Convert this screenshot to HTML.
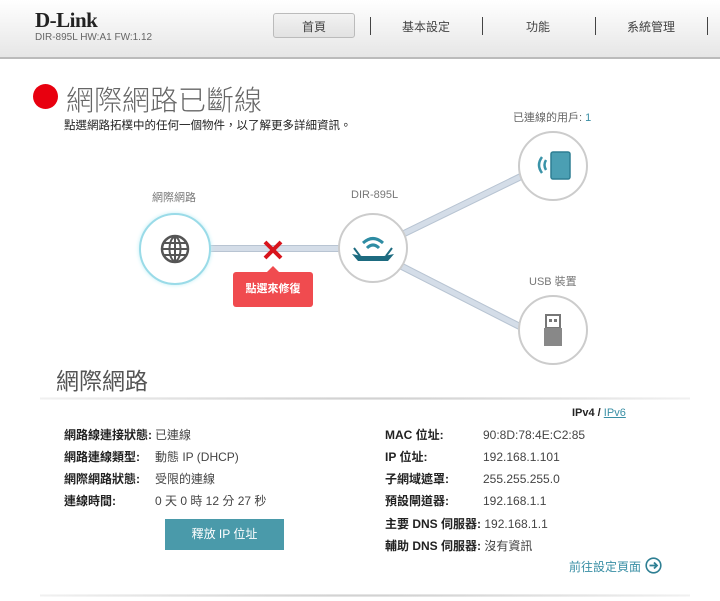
<!DOCTYPE html><html><head><meta charset="utf-8"><style>
body{margin:0;width:720px;height:601px;background:#fff;font-family:"Liberation Sans","Noto Sans CJK TC",sans-serif;position:relative;overflow:hidden;color:#333}
.a{position:absolute;white-space:nowrap}
.hdr{position:absolute;left:0;top:0;width:720px;height:57px;background:linear-gradient(#fff,#e6e6e6);border-bottom:2px solid #bbb}
.sep{position:absolute;top:17px;width:1px;height:18px;background:#444}
.nav{position:absolute;top:18px;font-size:12px;color:#444;width:100px;text-align:center}
.circ{position:absolute;border-radius:50%;background:#fff;border:2px solid #ccc;box-sizing:border-box}
.lbl{font-size:12px;font-weight:bold;color:#222;line-height:16px}
.val{font-size:12px;color:#444;line-height:16px}
.ln{position:absolute;height:5px;background:#d4dde8;border-top:1px solid #b8c4d2;border-bottom:1px solid #b8c4d2;transform-origin:0 50%}
</style></head><body>
<div class="hdr"></div>
<div class="a" style="left:35px;top:8px;font:bold 21px 'Liberation Serif',serif;color:#222;letter-spacing:-0.5px">D-Link</div>
<div class="a" style="left:35px;top:32px;font-size:10px;color:#666">DIR-895L HW:A1 FW:1.12</div>
<div class="a" style="left:273px;top:13px;width:82px;height:25px;border:1px solid #bbb;border-radius:3px;background:linear-gradient(#f2f2f2,#e2e2e2);box-sizing:border-box"></div>
<div class="nav" style="left:264px">首頁</div>
<div class="nav" style="left:376px">基本設定</div>
<div class="nav" style="left:488px">功能</div>
<div class="nav" style="left:601px">系統管理</div>
<div class="sep" style="left:370px"></div><div class="sep" style="left:482px"></div><div class="sep" style="left:595px"></div><div class="sep" style="left:707px"></div>

<div class="a" style="left:33px;top:84px;width:25px;height:25px;border-radius:50%;background:#e8000f"></div>
<div class="a" style="left:66px;top:79px;font-size:28px;color:#666;font-weight:300">網際網路已斷線</div>
<div class="a" style="left:64px;top:117px;font-size:11.5px;color:#222">點選網路拓樸中的任何一個物件，以了解更多詳細資訊。</div>
<div class="a" style="left:513px;top:109px;font-size:11px;color:#666">已連線的用戶: <span style="color:#3a8fa5">1</span></div>

<div class="ln" style="left:208px;top:245px;width:134px"></div>
<div class="ln" style="left:400px;top:232px;width:135px;transform:rotate(-26deg)"></div>
<div class="ln" style="left:400px;top:262px;width:135px;transform:rotate(27deg)"></div>

<div class="a" style="left:152px;top:189px;font-size:11px;color:#777">網際網路</div>
<div class="a" style="left:351px;top:189px;font-size:11px;color:#777">DIR-895L</div>
<div class="a" style="left:529px;top:273px;font-size:11px;color:#777">USB 裝置</div>

<div class="circ" style="left:139px;top:213px;width:72px;height:72px;border-color:#9adbe8;box-shadow:0 0 4px #bfeef5"></div>
<svg class="a" style="left:159px;top:233px" width="32" height="32" viewBox="0 0 32 32"><circle cx="16" cy="16" r="13" fill="none" stroke="#555" stroke-width="2.5"/><ellipse cx="16" cy="16" rx="5.5" ry="12" fill="none" stroke="#555" stroke-width="2"/><line x1="16" y1="3" x2="16" y2="29" stroke="#555" stroke-width="2"/><line x1="3" y1="16" x2="29" y2="16" stroke="#555" stroke-width="2"/><line x1="5" y1="10" x2="27" y2="10" stroke="#555" stroke-width="2"/><line x1="5" y1="22" x2="27" y2="22" stroke="#555" stroke-width="2"/></svg>

<svg class="a" style="left:262px;top:239px" width="22" height="22" viewBox="0 0 22 22"><path d="M3 3L19 19M19 3L3 19" stroke="#d8141c" stroke-width="4"/></svg>
<div class="a" style="left:267px;top:266px;width:0;height:0;border-left:6px solid transparent;border-right:6px solid transparent;border-bottom:6px solid #f04b4f"></div>
<div class="a" style="left:233px;top:272px;width:80px;height:35px;background:#f04b4f;border-radius:3px;color:#fff;font-size:11px;font-weight:bold;text-align:center;line-height:35px">點選來修復</div>

<div class="circ" style="left:338px;top:213px;width:70px;height:70px"></div>
<svg class="a" style="left:350px;top:230px" width="46" height="36" viewBox="0 0 46 36"><path d="M13 13Q23 4 33 13" fill="none" stroke="#2e8ca3" stroke-width="3"/><path d="M17 18Q23 12 29 18" fill="none" stroke="#2e8ca3" stroke-width="3"/><path d="M2 24L12 26L34 26L44 24L38 31L8 31Z" fill="#1d6b80"/><path d="M4 18L10 26M42 18L36 26" stroke="#1d6b80" stroke-width="2"/></svg>

<div class="circ" style="left:518px;top:131px;width:70px;height:70px"></div>
<svg class="a" style="left:533px;top:148px" width="40" height="36" viewBox="0 0 40 36"><path d="M9 9Q3 17 9 25M13 12Q10 17 13 22" fill="none" stroke="#3a93a8" stroke-width="2.5"/><rect x="18" y="4" width="19" height="27" rx="2" fill="#4b9fb3" stroke="#2e7f93" stroke-width="1.5"/></svg>

<div class="circ" style="left:518px;top:295px;width:70px;height:70px"></div>
<svg class="a" style="left:541px;top:313px" width="24" height="36" viewBox="0 0 24 36"><rect x="5" y="2" width="14" height="13" fill="#fff" stroke="#777" stroke-width="2"/><rect x="8" y="6" width="3" height="3" fill="#777"/><rect x="13" y="6" width="3" height="3" fill="#777"/><rect x="3" y="15" width="18" height="18" fill="#888"/></svg>

<div class="a" style="left:56px;top:362px;font-size:23px;color:#555">網際網路</div>
<div class="a" style="left:40px;top:397px;width:650px;height:3px;background:radial-gradient(ellipse at center,#ccc,rgba(255,255,255,0))"></div>

<div class="a" style="left:572px;top:407px;font-size:11px;font-weight:bold;color:#222">IPv4 / <span style="color:#3a8fa5;text-decoration:underline;font-weight:normal">IPv6</span></div>

<div class="a lbl" style="left:64px;top:427px">網路線連接狀態:</div><div class="a val" style="left:155px;top:427px">已連線</div>
<div class="a lbl" style="left:64px;top:449px">網路連線類型:</div><div class="a val" style="left:155px;top:449px">動態 IP (DHCP)</div>
<div class="a lbl" style="left:64px;top:471px">網際網路狀態:</div><div class="a val" style="left:155px;top:471px">受限的連線</div>
<div class="a lbl" style="left:64px;top:493px">連線時間:</div><div class="a val" style="left:155px;top:493px">0 天 0 時 12 分 27 秒</div>
<div class="a" style="left:165px;top:519px;width:119px;height:31px;background:#4a9aaa;color:#fff;font-size:12px;text-align:center;line-height:31px">釋放 IP 位址</div>

<div class="a lbl" style="left:385px;top:427px">MAC 位址:</div><div class="a val" style="left:483px;top:427px">90:8D:78:4E:C2:85</div>
<div class="a lbl" style="left:385px;top:449px">IP 位址:</div><div class="a val" style="left:483px;top:449px">192.168.1.101</div>
<div class="a lbl" style="left:385px;top:471px">子網域遮罩:</div><div class="a val" style="left:483px;top:471px">255.255.255.0</div>
<div class="a lbl" style="left:385px;top:493px">預設閘道器:</div><div class="a val" style="left:483px;top:493px">192.168.1.1</div>
<div class="a lbl" style="left:385px;top:516px">主要 DNS 伺服器: <span class="val" style="font-weight:normal">192.168.1.1</span></div>
<div class="a lbl" style="left:385px;top:538px">輔助 DNS 伺服器: <span class="val" style="font-weight:normal">沒有資訊</span></div>
<div class="a" style="left:569px;top:558px;font-size:12px;color:#3a8fa5">前往設定頁面</div>
<svg class="a" style="left:645px;top:557px" width="17" height="17" viewBox="0 0 17 17"><circle cx="8.5" cy="8.5" r="7.3" fill="none" stroke="#2e7f93" stroke-width="1.6"/><path d="M4.5 8.5H12M9 5.5L12 8.5L9 11.5" fill="none" stroke="#2e7f93" stroke-width="1.8"/></svg>
<div class="a" style="left:40px;top:594px;width:650px;height:3px;background:radial-gradient(ellipse at center,#ccc,rgba(255,255,255,0))"></div>
</body></html>
